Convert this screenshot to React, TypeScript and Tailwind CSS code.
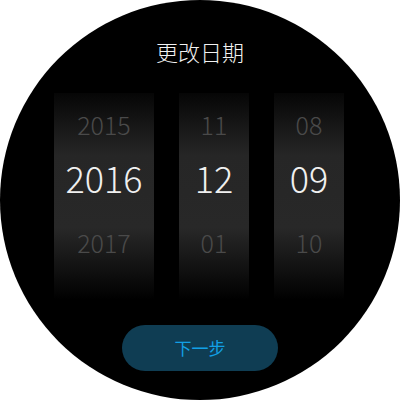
import React from "react";

const cols = [
  { w: "w-[100px]", prev: "2015", cur: "2016", next: "2017" },
  { w: "w-[70px]", prev: "11", cur: "12", next: "01" },
  { w: "w-[70px]", prev: "08", cur: "09", next: "10" },
];

export default function App() {
  return (
    <div
      className="w-[400px] h-[400px] bg-white"
      style={{ fontFamily: '"Noto Sans CJK SC", "Noto Sans", sans-serif' }}
    >
      <div className="w-full h-full rounded-full bg-black flex flex-col items-center">
        <div className="mt-[37px] h-[28px] leading-[28px] text-[22px] font-light text-[#f2f2f2]">更改日期</div>
        <div className="mt-[28px] w-full flex pl-[54px] gap-[25px]">
          {cols.map((c, i) => (
            <div
              key={i}
              className={`${c.w} h-[207px] flex flex-col items-center bg-[linear-gradient(to_bottom,#060606_0%,#262626_30%,#282828_65%,#000000_100%)]`}
            >
              <div className="mt-[16px] h-[30px] leading-[30px] text-[25px] font-light text-[#4a4a4a]">{c.prev}</div>
              <div className="mt-[15px] h-[46px] leading-[46px] text-[36px] font-light text-[#f0f0f0]">{c.cur}</div>
              <div className="mt-[27px] h-[30px] leading-[30px] text-[25px] font-light text-[#4a4a4a]">{c.next}</div>
            </div>
          ))}
        </div>
        <div className="mt-[25px] w-[156px] h-[46px] rounded-full bg-[#0f3d53] flex items-center justify-center text-[17px] text-[#12a0e6]">
          下一步
        </div>
      </div>
    </div>
  );
}
